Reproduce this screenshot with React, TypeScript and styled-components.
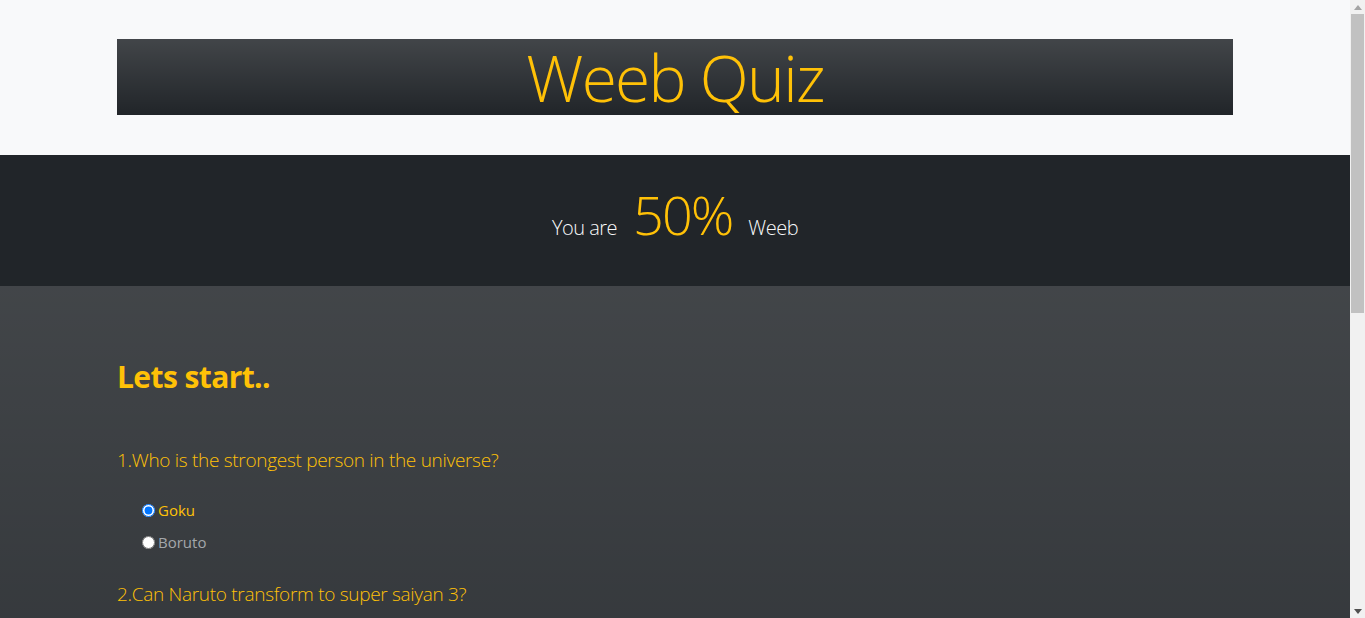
import React, { useState } from "react";
import styled, { createGlobalStyle } from "styled-components";

const GlobalStyle = createGlobalStyle`
  html, body {
    margin: 0;
    padding: 0;
  }
  body {
    font-family: "Open Sans", "Noto Sans", Arial, sans-serif;
    background: #f8f9fa;
    color: #212529;
  }
  * { box-sizing: border-box; }
`;

const gradient = "linear-gradient(180deg, rgba(255,255,255,0.15), rgba(255,255,255,0))";

const Page = styled.div`
  margin-right: 15px;
`;

const Container = styled.div`
  width: 1140px;
  max-width: 100%;
  margin: 0 auto;
  padding: 0 12px;
`;

const HeaderSection = styled.header`
  background: #f8f9fa;
  padding: 39px 0 40px;
`;

const Banner = styled.h1`
  margin: 0;
  height: 76px;
  padding-top: 2px;
  line-height: 74px;
  text-align: center;
  font-size: 64px;
  font-weight: 300;
  letter-spacing: -1.7px;
  color: #ffc107;
  background-color: #212529;
  background-image: ${gradient};
`;

const ScoreSection = styled.section`
  background: #212529;
  height: 131px;
  display: flex;
  align-items: center;
  justify-content: center;
`;

const ScoreRow = styled.div`
  display: flex;
  align-items: baseline;
  gap: 16px;
  margin-top: -13px;
`;

const Lead = styled.span`
  font-size: 20px;
  font-weight: 300;
  letter-spacing: -0.5px;
  color: #f8f9fa;
`;

const Percent = styled.span`
  font-size: 54px;
  font-weight: 300;
  line-height: 1.2;
  letter-spacing: -2px;
  color: #ffc107;
`;

const QuizSection = styled.main`
  background-color: #212529;
  background-image: ${gradient};
  padding: 72px 0 80px;
  min-height: 933px;
`;

const Title = styled.h2`
  margin: 0 0 49px;
  font-size: 30px;
  line-height: 38px;
  font-weight: 700;
  letter-spacing: -0.6px;
  color: #ffc107;
`;

const QuestionBlock = styled.div`
  margin-bottom: 21px;
`;

const Question = styled.p`
  margin: 0 0 19px;
  font-size: 19px;
  line-height: 30px;
  font-weight: 300;
  letter-spacing: -0.3px;
  color: #ffc107;
`;

const Options = styled.div`
  display: flex;
  flex-direction: column;
  padding-left: 25px;
`;

const OptionLabel = styled.label<{ $active: boolean }>`
  display: flex;
  align-items: center;
  height: 32px;
  font-size: 15px;
  color: ${(p) => (p.$active ? "#ffc107" : "#a3a7ab")};
  cursor: pointer;
`;

const Radio = styled.input`
  width: 13px;
  height: 13px;
  margin: 0 3px 0 0;
`;

/* Browser scrollbar, drawn over the right edge of the viewport */
const ScrollTrack = styled.div`
  position: fixed;
  top: 0;
  right: 0;
  width: 15px;
  height: 100vh;
  background: #f1f1f1;
  display: flex;
  flex-direction: column;
  align-items: center;
`;

const ScrollButton = styled.div`
  height: 14px;
  width: 15px;
  display: flex;
  align-items: center;
  justify-content: center;
`;

const ScrollThumb = styled.div`
  width: 13px;
  height: 299px;
  background: #c1c1c1;
`;

const ScrollSpacer = styled.div`
  flex: 1;
`;

const questions = [
  { q: "Who is the strongest person in the universe?", options: ["Goku", "Boruto"] },
  { q: "Can Naruto transform to super saiyan 3?", options: ["Yes", "No"] },
];

export default function App() {
  const [answers, setAnswers] = useState<Record<number, string>>({ 0: "Goku" });
  return (
    <>
      <GlobalStyle />
      <Page>
        <HeaderSection>
          <Container>
            <Banner>Weeb Quiz</Banner>
          </Container>
        </HeaderSection>
        <ScoreSection>
          <ScoreRow>
            <Lead>You are</Lead>
            <Percent>50%</Percent>
            <Lead>Weeb</Lead>
          </ScoreRow>
        </ScoreSection>
        <QuizSection>
          <Container>
            <Title>Lets start..</Title>
            {questions.map((item, i) => (
              <QuestionBlock key={i}>
                <Question>
                  {i + 1}.{item.q}
                </Question>
                <Options>
                  {item.options.map((opt) => (
                    <OptionLabel key={opt} $active={answers[i] === opt}>
                      <Radio
                        type="radio"
                        name={`q${i}`}
                        checked={answers[i] === opt}
                        onChange={() => setAnswers({ ...answers, [i]: opt })}
                      />
                      {opt}
                    </OptionLabel>
                  ))}
                </Options>
              </QuestionBlock>
            ))}
          </Container>
        </QuizSection>
      </Page>
      <ScrollTrack aria-hidden="true">
        <ScrollButton>
          <svg width="8" height="5" viewBox="0 0 8 5">
            <polygon points="0,5 8,5 4,0" fill="#a3a3a3" />
          </svg>
        </ScrollButton>
        <ScrollThumb />
        <ScrollSpacer />
        <ScrollButton>
          <svg width="8" height="5" viewBox="0 0 8 5">
            <polygon points="0,0 8,0 4,5" fill="#505050" />
          </svg>
        </ScrollButton>
      </ScrollTrack>
    </>
  );
}
